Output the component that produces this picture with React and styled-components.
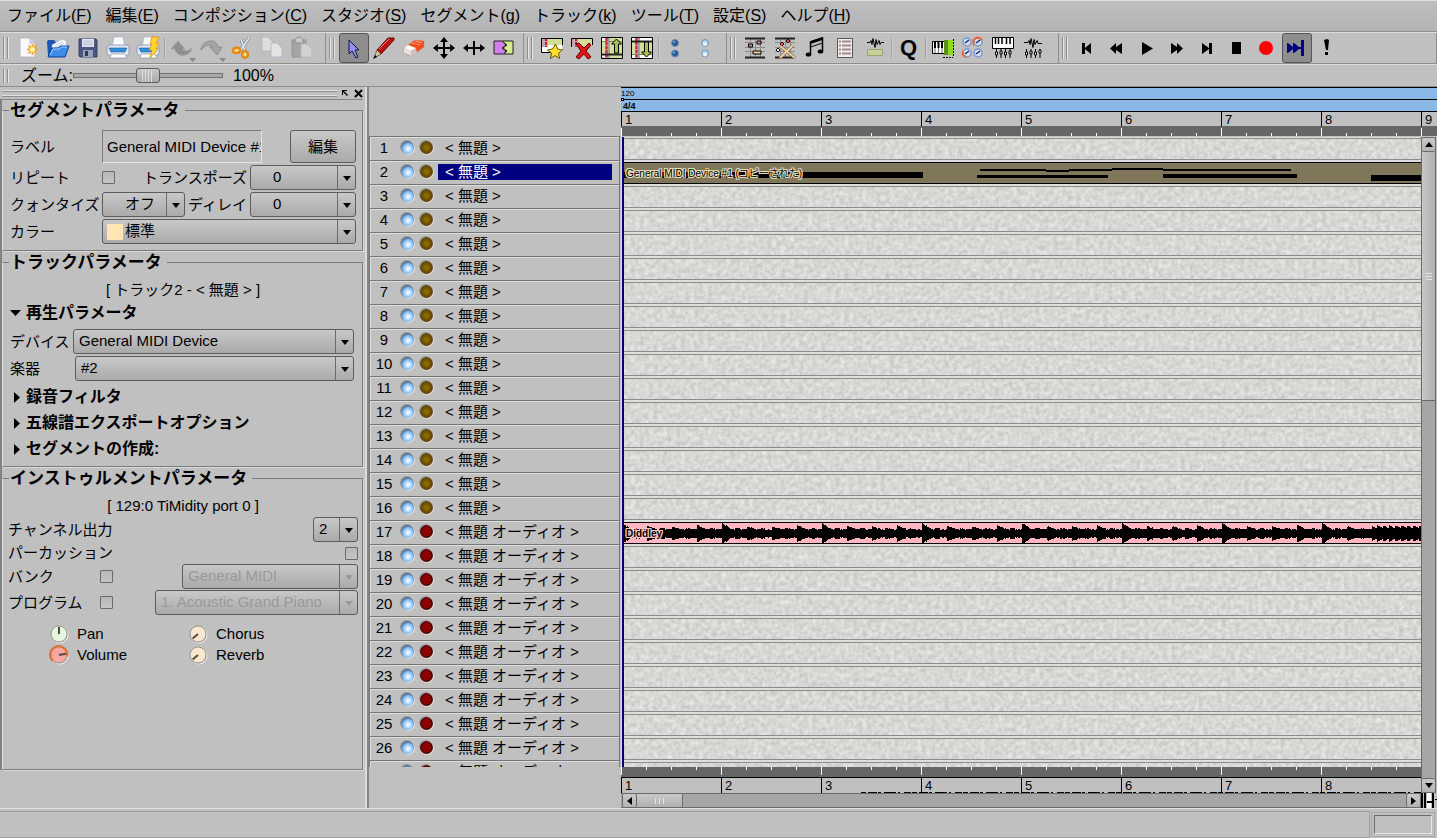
import React, { useState } from 'react';
import styled, { createGlobalStyle } from 'styled-components';

/* ---------- data ---------- */

const menus = [
    ['ファイル', 'F'], ['編集', 'E'], ['コンポジション', 'C'], ['スタジオ', 'S'], ['セグメント', 'g'],
    ['トラック', 'k'], ['ツール', 'T'], ['設定', 'S'], ['ヘルプ', 'H'],
];

const tracks = Array.from({ length: 27 }, (_, i) => ({
    id: i + 1,
    audio: i >= 16,
    name: i >= 16 ? '< 無題 オーディオ >' : '< 無題 >',
}));

const bars = [1, 2, 3, 4, 5, 6, 7, 8, 9];

// x, y, width, height of the notes in the segment preview
const notes = [
    [0, 9, 299, 6], [356, 6, 66, 2], [353, 12, 131, 3], [422, 7, 23, 2], [445, 6, 43, 2],
    [488, 5, 51, 2], [539, 6, 128, 2], [539, 11, 134, 4], [747, 12, 51, 6],
];

// peaks for the audio preview, one for each pixel column
const peaks = Array.from({ length: 798 }, (_, x) => {
    const rand = Math.abs(Math.sin(x * 12.9898) * 43758.5453) % 1;
    const small = Math.abs(Math.sin(x * 4.17) * 917.3) % 1;
    if (x > 747) {
        return Math.round(5 + 3 * (1 - ((x - 747) % 6) / 6) + rand);
    }
    const beat = (x + 2) % 25;
    const loud = [10, 7, 7, 8][Math.floor((x + 2) / 25) % 4];
    const tail = beat < 9 ? (loud - 4) * (1 - beat / 9) : (beat > 12 && beat < 18 ? 1 : 0);
    return Math.round(4 + tail + rand + small / 2);
});

const wavePath = peaks.map((p, x) => `M${x} ${11 - p}h1v${p * 2 - 1}h-1z`).join('');

/* ---------- icons ---------- */

const Page = ({ x, y, w, h, fill }) => (
    <path d={`M${x} ${y}h${w - 5}l5 5v${h - 5}h${-w}z`} fill={fill || '#fbfbff'} stroke="#b6b8c8" />
);

const icons = {
    new: <>
        <Page x={3} y={1} w={15} h={19} />
        <path d="M13 1v5h5" fill="#d6d9e6" stroke="#b6b8c8" />
        <path d="M15.500 7v11M10 12.500h11M11.600 8.600l7.800 7.800M19.400 8.600l-7.800 7.800" stroke="#f0a81e" strokeWidth="2" />
        <circle cx="15.500" cy="12.500" r="2.500" fill="#fff3b0" />
    </>,
    open: <>
        <path d="M0 5l1-2h6l2 2h9v14H1z" fill="#1c56b4" />
        <path d="M5 8l10-6 4 2 1 10-15 2z" fill="#fdfdff" stroke="#9cb4d8" strokeWidth=".6" />
        <path d="M8 9l8-5M8 11l9-5" stroke="#b8cdea" />
        <path d="M1 20L5 11h6l3-2h8l-4 11z" fill="#3f8ceb" stroke="#0d3f98" />
        <path d="M3 18l3-6h6l3-2h5" stroke="#a8d4ff" fill="none" />
    </>,
    save: <>
        <path d="M2 2h17l1 1v17H3l-1-1z" fill="#4b5680" stroke="#39426a" />
        <path d="M5 2h12v8H5z" fill="#e2e6f2" />
        <path d="M6 4h10M6 6h10M6 8h10" stroke="#b7bdd2" />
        <path d="M6 13h10v7H6z" fill="#9aa2c0" />
        <path d="M8 14h3v5H8z" fill="#2f3858" />
    </>,
    print: <>
        <path d="M5 11L7 0h9l2 11z" fill="#fbfcff" stroke="#a8b4cc" strokeWidth=".7" />
        <path d="M0 10l3-2h17l2 2v7l-3 2H3l-3-2z" fill="#e4e8f2" stroke="#8890aa" strokeWidth=".8" />
        <path d="M2 11h18l-2 4H4z" fill="#2f8fd8" stroke="#155a9c" strokeWidth=".6" />
        <path d="M4 17h14l2 4H3z" fill="#fff" stroke="#8890aa" strokeWidth=".7" />
    </>,
    quickPrint: <>
        <path d="M5 11L7 0h9l2 11z" fill="#fbfcff" stroke="#a8b4cc" strokeWidth=".7" />
        <path d="M0 10l3-2h17l2 2v7l-3 2H3l-3-2z" fill="#e4e8f2" stroke="#8890aa" strokeWidth=".8" />
        <path d="M2 11h18l-2 4H4z" fill="#2f8fd8" stroke="#155a9c" strokeWidth=".6" />
        <path d="M4 17h14l2 4H3z" fill="#fff" stroke="#8890aa" strokeWidth=".7" />
        <path d="M15 0h7l-3 6h3l-3 6h2l-8 9 2-8h-3l3-6h-2z" fill="#ffd52e" stroke="#e8901a" strokeWidth=".8" />
    </>,
    undo: <>
        <path d="M7 4L0 12h4c1 5 5 7 10 6 4-1 7-4 7-7-3 3-8 4-10 1h3z" fill="#8e8e8e" stroke="#a2a2a2" />
        <path d="M18 21h7l-3 4z" fill="#8a8a8a" />
    </>,
    redo: <>
        <path d="M0 13C0 8 5 4 10 4c4 0 6 2 7 6h4l-5 8-7-8h3c-2-3-7-3-12 3z" fill="#a6a6a6" stroke="#8b8b8b" />
        <path d="M18 21h7l-3 4z" fill="#8a8a8a" />
    </>,
    cut: <>
        <path d="M18 1L9 14M10 2l4 12" stroke="#7f8898" strokeWidth="3" />
        <path d="M18 1L9 14M10 2l4 12" stroke="#e2e8f4" strokeWidth="1.500" />
        <ellipse cx="5.500" cy="13.500" rx="3.800" ry="2.600" fill="#f8d890" stroke="#e08a10" strokeWidth="2.500" transform="rotate(-10 5 13)" />
        <ellipse cx="14" cy="17.500" rx="3" ry="3.200" fill="#f8d890" stroke="#e08a10" strokeWidth="2.500" />
    </>,
    copy: <>
        <Page x={1} y={0} w={11} h={14} fill="#dedede" />
        <Page x={10} y={6} w={11} h={14} fill="#e4e4e4" />
    </>,
    paste: <>
        <path d="M1 3h14v17H1z" fill="#a4a4a4" stroke="#949494" />
        <path d="M4 4c0-5 8-5 8 0v2H4z" fill="#c8c8c8" stroke="#8e8e8e" />
        <Page x={10} y={7} w={11} h={13} fill="#d2d2d2" />
    </>,
    select: <path d="M6 3v14l3-3 4 7 2-1-3-7h4z" fill="#8f8ff0" stroke="#16163c" />,
    pencil: <>
        <path d="M15 1h6v2L8 17l-4-4z" fill="#c01010" stroke="#5c0808" />
        <path d="M16 2L6 12" stroke="#ff8080" />
        <path d="M4 13l4 4-7 4z" fill="#d8c89a" stroke="#2a1c10" strokeWidth=".6" />
        <path d="M0 22l4-2-2-2z" fill="#000" />
    </>,
    eraser: <>
        <path d="M1 11L12 3l9 1v6L9 19l-8-3z" fill="#f04c1c" stroke="#e08060" strokeWidth=".6" />
        <path d="M1 11l7 3 1 5-8-3z" fill="#e4e4e4" />
        <path d="M1 11l4-3 8 3-5 3z" fill="#fff" />
        <path d="M8 14l5-3 1 5-5 3z" fill="#c8c8c8" />
        <path d="M9 6l8 2M12 4l7 2" stroke="#ffa080" />
    </>,
    move: <path d="M11 0l4 5h-3v5h5V7l5 4-5 4v-3h-5v5h3l-4 5-4-5h3v-5H5v3l-5-4 5-4v3h5V5H7z" fill="#000" />,
    resize: <path d="M0 11l5-4v3h5V4h2v6h5V7l5 4-5 4v-3h-5v6h-2v-6H5v3z" fill="#000" />,
    split: <>
        <path d="M1 4h8l4 4-4 3 4 3-2 3H1z" fill="#d07fe8" stroke="#222" />
        <path d="M9 4h11v13h-9l3-3-4-3 4-3z" fill="#d4ec8c" stroke="#222" />
    </>,
    addTrack: <>
        <path d="M0 1h21v14H0z" fill="#fff" />
        <path d="M0 1h21v7H0z" fill="#d4dc98" />
        <path d="M1 1h6v9H1z" fill="#c8a0b0" />
        <path d="M5 1v9" stroke="#c02040" strokeWidth="2" strokeDasharray="3 1" />
        <path d="M.5 1v14.500H10M.5 1.500h21V8" fill="none" stroke="#000" />
        <path d="M14.500 7l2 5 5 1-4 3 1 5.500-4.500-3-4.500 3 1-5.500-4-3 5-1z" fill="#ffe02a" stroke="#6c5400" />
    </>,
    deleteTrack: <>
        <path d="M0 1h21v8H0z" fill="#d4dc98" />
        <path d="M1 1h6v8H1z" fill="#c8a0b0" />
        <path d="M5 1v9" stroke="#c02040" strokeWidth="2" strokeDasharray="3 1" />
        <path d="M.5 10V1.500h21V8" fill="none" stroke="#000" />
        <path d="M5 7l3-1 5 5 5-5 2 2-5 6 5 6-3 2-4-5-5 5-3-2 5-6z" fill="#e01818" stroke="#600" />
    </>,
    trackUp: <>
        <path d="M.5 .5h21v21H.5z" fill="#d4e09a" stroke="#000" />
        <path d="M1 3h3M1 18h3" stroke="#fff" strokeWidth="4" />
        <path d="M4 1h5v20H4z" fill="#b09aac" />
        <path d="M5.500 1v20" stroke="#d02040" strokeWidth="2" strokeDasharray="3 1" />
        <path d="M1 4.500h20" stroke="#7c8468" />
        <path d="M1 17.500h20" stroke="#222" strokeWidth="2" />
        <path d="M15.500 2l5 5h-3v9h-4V7h-3z" fill="#a8c058" stroke="#000" />
    </>,
    trackDown: <>
        <path d="M.5 .5h21v21H.5z" fill="#fff" stroke="#000" />
        <path d="M1 4h20v14H1z" fill="#d4e09a" />
        <path d="M4 1h5v20H4z" fill="#b09aac" />
        <path d="M5.500 1v20" stroke="#d02040" strokeWidth="2" strokeDasharray="3 1" />
        <path d="M1 4.500h20" stroke="#222" strokeWidth="2" />
        <path d="M1 17.500h20" stroke="#7c8468" />
        <path d="M15.500 20l5-5h-3V5h-4v10h-3z" fill="#a8c058" stroke="#000" />
    </>,
    muteAll: <>
        <circle cx="10" cy="6" r="3.500" fill="#2c5a90" stroke="#6d8db2" />
        <circle cx="10" cy="16.500" r="3.500" fill="#2c5a90" stroke="#6d8db2" />
        <circle cx="9" cy="5" r="1" fill="#8fb4dc" /><circle cx="9" cy="15.500" r="1" fill="#8fb4dc" />
    </>,
    unmuteAll: <>
        <circle cx="10" cy="6" r="3.500" fill="#a8d0f8" stroke="#7694b8" />
        <circle cx="10" cy="16.500" r="3.500" fill="#a8d0f8" stroke="#7694b8" />
        <circle cx="10" cy="7" r="2" fill="#e8f6ff" /><circle cx="10" cy="17.500" r="2" fill="#e8f6ff" />
    </>,
    matrix: <>
        <path d="M1 5.500h20M1 10.500h20M1 14.500h20M6.500 1v20M11.500 1v20M16.500 1v20" stroke="#8c8c8c" />
        <path d="M1 1.500h20M1 20.500h20" stroke="#222" strokeWidth="2" />
        <path d="M4.500 7h4v3h-4zM13 4h4v3h-4z" fill="#d09090" stroke="#000" />
        <path d="M9 14h8v3H9z" fill="#f0d090" stroke="#000" />
    </>,
    percussion: <>
        <path d="M1 5.500h20M1 10.500h20M1 14.500h20M6.500 1v20M11.500 1v20M16.500 1v20" stroke="#8c8c8c" />
        <path d="M1 1.500h20M1 20.500h20" stroke="#222" strokeWidth="2" />
        <path d="M8 5l2 2-2 2-2-2zM14 2l2 2-2 2-2-2z" fill="#d06060" stroke="#400" />
        <path d="M4 11l2 2-2 2-2-2z" fill="#fff" stroke="#000" />
        <path d="M6 9l15 12M19 8L6 21" stroke="#75583c" strokeWidth="3" />
        <path d="M6 9l15 12M19 8L6 21" stroke="#ecd0a8" strokeWidth="2" />
    </>,
    notation: <>
        <path d="M6.500 17V5l12-4v13" fill="none" stroke="#000" strokeWidth="1.500" />
        <path d="M6.500 4l12-4v3l-12 4z" fill="#000" />
        <path d="M6.500 10l12-4" stroke="#000" />
        <ellipse cx="4.500" cy="17.500" rx="2.800" ry="2" fill="#000" />
        <ellipse cx="16.500" cy="14.500" rx="2.800" ry="2" fill="#000" />
    </>,
    eventList: <>
        <path d="M3.500 1.500h15v19h-15z" fill="#f4eeee" stroke="#555" />
        <path d="M5 4.500h2M5 8.500h2M5 12.500h2M5 16.500h2M8 4.500h9M8 8.500h9M8 12.500h9M8 16.500h9" stroke="#a08c8c" strokeWidth="2" />
    </>,
    audioEdit: <>
        <path d="M3 5.500h3l1-2 1 4 1-6 2 9 1-8 1 5 2-4 1 4 1-2h3" fill="none" stroke="#000" />
        <path d="M3.500 12.500h15v6h-15z" fill="#c8d098" stroke="#9aa46c" />
    </>,
    quantize: <text x="2" y="18" fontFamily="Liberation Sans" fontWeight="bold" fontSize="22" fill="#000">Q</text>,
    banks: <>
        <path d="M.5 4.500h13v12H.5z" fill="#fff" stroke="#000" />
        <path d="M3 4v7M6.500 4v7M10 4v7" stroke="#000" strokeWidth="2" />
        <path d="M3 11v5M6.500 11v5M10 11v5" stroke="#666" />
        <path d="M12 3h9v15h-9z" fill="#8cdc1c" />
        <path d="M12 3h4v15h-4z" fill="#5c8c20" />
        <path d="M21.500 2v17M11 20.500h10" stroke="#000" strokeDasharray="2 1" />
    </>,
    controllers: <>
        {[[5, 5], [16, 5], [5, 16], [16, 16]].map(([x, y]) => (
            <g key={`${x}-${y}`}>
                <circle cx={x} cy={y} r="4" fill="#cfe0fa" stroke="#7d97cc" strokeWidth="1.500" />
                <path d={`M${x + 2} ${y - 2}l-4 3`} stroke="#222a50" strokeWidth="1.500" />
            </g>
        ))}
        <path d="M12 8c-3-6 4-10 8-5M1 14c-1 3 0 5 3 6" fill="none" stroke="#e8683a" strokeWidth="2" />
    </>,
    keys: <>
        <path d="M.5 .5h21v11H.5z" fill="#fff" stroke="#000" />
        <path d="M3.500 1v6M6.500 1v6M10 1v6M14.500 1v6M18 1v6" stroke="#000" strokeWidth="1.500" />
        <path d="M4.500 12v9M9 12v9M13.500 12v9M18 12v9" stroke="#000" />
        <path d="M3.500 15h2v3h-2zM8 14h2v3H8zM12.500 15h2v3h-2zM17 14h2v3h-2z" fill="#fff" stroke="#000" />
    </>,
    mixer: <>
        <path d="M2 5.500h4l1-2 1 4 1-6 2 9 1-8 1 5 2-4 1 3h4" fill="none" stroke="#000" />
        <path d="M4.500 12v9M9 12v9M13.500 12v9M18 12v9" stroke="#000" />
        <path d="M3.500 15h2v3h-2zM8 14h2v3H8zM12.500 15h2v3h-2zM17 13h2v3h-2z" fill="#fff" stroke="#000" />
    </>,
    toStart: <path d="M6 6h3v5l6-5v11l-6-5v5H6z" fill="#000" />,
    rewind: <path d="M4 11.500L10 6v4l6-4v11l-6-4v4z" fill="#000" />,
    play: <path d="M6 5l11 6.500L6 18z" fill="#000" />,
    forward: <path d="M17 11.500L11 6v4L5 6v11l6-4v4z" fill="#000" />,
    toEnd: <path d="M16 6h-3v5L6 6v11l7-5v5h3z" fill="#000" />,
    stop: <path d="M6 5h9v12H6z" fill="#000" />,
    record: <circle cx="10" cy="11" r="7" fill="#f00" />,
    follow: <path d="M1 6h1l5 4V6h1l5 4h2V3h3v16h-3v-7h-2l-5 4H7v-4l-5 4H1z" fill="#000080" />,
    panic: <path d="M8 3l3-1 2 1-1 10h-2zM9 15h3v3H9z" fill="#000" />,
};

const toolGroups = [
    { end: 8, items: ['new', 'open', 'save', 'print', 'quickPrint', '|', 'undo', 'redo', 'cut', 'copy', 'paste'] },
    { end: 4, items: ['select', 'pencil', 'eraser', 'move', 'resize', 'split'] },
    { end: 5, items: ['addTrack', 'deleteTrack', 'trackUp', 'trackDown', '|', 'muteAll', 'unmuteAll'] },
    { end: 10, items: ['matrix', 'percussion', 'notation', 'eventList', 'audioEdit', '|', 'quantize', '|', 'banks', 'controllers', 'keys', 'mixer'] },
    { end: 0, items: ['toStart', 'rewind', 'play', 'forward', 'toEnd', 'stop', 'record', 'follow', 'panic'] },
];

/* ---------- parts ---------- */

function Combo({ label, value, width, disabled, swatch }) {
    return (
        <ComboBox $width={width} $disabled={disabled}>
            <select aria-label={label} disabled={disabled} defaultValue={value}>
                <option>{value}</option>
            </select>
            {swatch && <Swatch />}
            <svg width="8" height="5" viewBox="0 0 8 5"><path d="M0 0h8L4 5z" fill={disabled ? '#999' : '#000'} /></svg>
        </ComboBox>
    );
}

function Knob({ name, face, ring, angle }) {
    return (
        <KnobLabel>
            <KnobButton aria-label={name}>
                <svg width="20" height="20" viewBox="0 0 20 20">
                    <circle cx="11" cy="11" r="8" fill="none" stroke="#ececec" />
                    <circle cx="10" cy="10" r="8" fill={face} stroke="#9a9488" />
                    {ring && <path d="M4 16a8.500 8.500 0 1 1 14-5" fill="none" stroke="#e07030" strokeWidth="2" />}
                    <path d="M10 10V3" stroke="#554a40" strokeWidth="2" transform={`rotate(${angle} 10 10)`} />
                </svg>
            </KnobButton>
            {name}
        </KnobLabel>
    );
}

function Ruler({ bottom }) {
    const strip = (
        <TickStrip>
            {bars.map(bar => (
                <BarTicks key={bar} $bottom={bottom}>
                    <Tick $big /><Tick /><Tick /><Tick />
                </BarTicks>
            ))}
        </TickStrip>
    );
    return (
        <>
            {bottom && strip}
            <BarStrip $bottom={bottom}>
                {bars.slice(0, bottom ? 8 : 9).map(bar => <Bar key={bar}>{bar}</Bar>)}
                {bottom && (
                    <Dashes width="560" height="1">
                        <path d="M0 .5h560" stroke="#000" strokeDasharray="5 2 9 1 3 3 12 2 2 4 7 1" />
                    </Dashes>
                )}
            </BarStrip>
            {!bottom && strip}
        </>
    );
}

function App() {
    const [selected, setSelected] = useState(2);
    const [zoom, setZoom] = useState(50);

    return (
        <Window>
            <GlobalStyle />
            <MenuBar>
                {menus.map(([name, key]) => (
                    <MenuItem key={name}>{name}(<u>{key}</u>)</MenuItem>
                ))}
            </MenuBar>

            <ToolBar>
                {toolGroups.map((group, g) => (
                    <ToolGroup key={g} $end={group.end}>
                        <Handle />
                        {group.items.map((item, i) => item === '|' ? <Divider key={i} /> : (
                            <ToolButton key={item} aria-label={item} $on={item === 'select' || item === 'follow'}>
                                <svg width="22" height="22" viewBox="0 0 22 22" fill="none">{icons[item]}</svg>
                            </ToolButton>
                        ))}
                    </ToolGroup>
                ))}
            </ToolBar>

            <ZoomBar>
                <Handle />
                <label htmlFor="zoom">ズーム:</label>
                <Slider id="zoom" type="range" value={zoom} onChange={e => setZoom(e.target.value)} />
                <span>100%</span>
            </ZoomBar>

            <Main>
                {/* parameter dock */}
                <Dock>
                    <DockTitle>
                        <Rails />
                        <DockButton aria-label="float">
                            <svg width="7" height="7"><path d="M0 0h5v1H2l4 4-1 1-4-4v3H0z" /></svg>
                        </DockButton>
                        <DockButton aria-label="close">
                            <svg width="9" height="9"><path d="M1 1l7 7M8 1L1 8" stroke="#000" strokeWidth="2" /></svg>
                        </DockButton>
                    </DockTitle>
                    <DockBody>
                        <Group>
                            <legend>セグメントパラメータ</legend>
                            <Fields $top={9} $bottom={6}>
                                <Field $height={33}>
                                    <Caption $width={92} htmlFor="segment-label">ラベル</Caption>
                                    <TextBox id="segment-label" readOnly value="General MIDI Device #1 (コピーされた)" />
                                    <EditButton>編集</EditButton>
                                </Field>
                                <Field>
                                    <Caption $width={92} htmlFor="repeat">リピート</Caption>
                                    <CheckBox id="repeat" />
                                    <Caption $right>トランスポーズ</Caption>
                                    <InsetCombo><Combo label="トランスポーズ" value="0" width={106} /></InsetCombo>
                                </Field>
                                <Field>
                                    <Caption $width={92}>クォンタイズ</Caption>
                                    <InsetCombo><Combo label="クォンタイズ" value="オフ" width={83} /></InsetCombo>
                                    <Caption $right>ディレイ</Caption>
                                    <InsetCombo><Combo label="ディレイ" value="0" width={106} /></InsetCombo>
                                </Field>
                                <Field>
                                    <Caption $width={92}>カラー</Caption>
                                    <InsetCombo $grow><Combo label="カラー" value="標準" swatch /></InsetCombo>
                                </Field>
                            </Fields>
                        </Group>

                        <Group>
                            <legend>トラックパラメータ</legend>
                            <Fields $top={7} $bottom={4} $flush>
                                <Center>[ トラック2 - &lt; 無題 &gt; ]</Center>
                                <Fold $open><svg width="11" height="6"><path d="M0 0h11L5.500 6z" /></svg>再生パラメータ</Fold>
                                <Pickers>
                                    <Field>
                                        <Caption $width={63}>デバイス</Caption>
                                        <Combo label="デバイス" value="General MIDI Device" />
                                    </Field>
                                    <Field>
                                        <Caption $width={65}>楽器</Caption>
                                        <Combo label="楽器" value="#2" />
                                    </Field>
                                </Pickers>
                                {['録音フィルタ', '五線譜エクスポートオプション', 'セグメントの作成:'].map(name => (
                                    <Fold key={name}><svg width="11" height="11"><path d="M4 0l6 5.500L4 11z" /></svg>{name}</Fold>
                                ))}
                            </Fields>
                        </Group>

                        <Group $grow>
                            <legend>インストゥルメントパラメータ</legend>
                            <Fields $top={7} $bottom={4} $wide $flush>
                                <Center>[ 129:0 TiMidity port 0 ]</Center>
                                <Field $apart>
                                    <Caption>チャンネル出力</Caption>
                                    <Combo label="チャンネル出力" value="2" width={45} />
                                </Field>
                                <Field $apart $height={22}>
                                    <Caption htmlFor="percussion">パーカッション</Caption>
                                    <CheckBox id="percussion" />
                                </Field>
                                <Field $apart>
                                    <Caption $width={92} htmlFor="bank">バンク</Caption>
                                    <CheckBox id="bank" />
                                    <Push><Combo label="バンク" value="General MIDI" width={176} disabled /></Push>
                                </Field>
                                <Field $apart $height={27}>
                                    <Caption $width={92} htmlFor="program">プログラム</Caption>
                                    <CheckBox id="program" />
                                    <Push><Combo label="プログラム" value="1. Acoustic Grand Piano" width={203} disabled /></Push>
                                </Field>
                                <Knobs>
                                    <Knob name="Pan" face="#e2f6e0" angle={0} />
                                    <Knob name="Chorus" face="#f8e8d0" angle={-130} />
                                    <Knob name="Volume" face="#f8a8a0" ring angle={80} />
                                    <Knob name="Reverb" face="#f8e8d0" angle={-130} />
                                </Knobs>
                            </Fields>
                        </Group>
                    </DockBody>
                </Dock>

                {/* track buttons */}
                <TrackPane>
                    <TrackList>
                        {tracks.map(track => (
                            <TrackRow key={track.id} onClick={() => setSelected(track.id)}>
                                <TrackNumber>{track.id < 27 && track.id}</TrackNumber>
                                <Led $mute aria-label="mute" />
                                <Led $audio={track.audio} aria-label="record" />
                                <TrackName $selected={selected === track.id}>{track.name}</TrackName>
                            </TrackRow>
                        ))}
                    </TrackList>
                </TrackPane>

                {/* composition */}
                <Timeline>
                    <TempoRuler>120<TempoPoint /></TempoRuler>
                    <SignatureRuler>4/4</SignatureRuler>
                    <Ruler />
                    <Scroller>
                        <CanvasColumn>
                            <Canvas>
                                <Paper>
                                    <filter id="grain" x="0" y="0" width="100%" height="100%" colorInterpolationFilters="sRGB">
                                        <feTurbulence type="fractalNoise" baseFrequency="0.22" numOctaves="3" seed="4" />
                                        <feColorMatrix values="0.2 0 0 0 0.75  0.2 0 0 0 0.745  0.2 0 0 0 0.73  0 0 0 0 1" />
                                    </filter>
                                    <rect width="100%" height="100%" filter="url(#grain)" />
                                </Paper>
                                {tracks.map(track => (
                                    <Lane key={track.id}>
                                        {track.id === 2 && (
                                            <Segment $color="#80765a">
                                                <svg width="798" height="20">
                                                    {notes.map(([x, y, w, h], i) => <rect key={i} x={x} y={y} width={w} height={h} />)}
                                                </svg>
                                                <SegmentName $halo="#e8dfb8">General MIDI Device #1 (コピーされた)</SegmentName>
                                            </Segment>
                                        )}
                                        {track.id === 17 && (
                                            <Segment $color="#ffb6c1">
                                                <svg width="798" height="20"><path d={wavePath} /></svg>
                                                <SegmentName $halo="#ffc8d0" $bold>Diddley</SegmentName>
                                            </Segment>
                                        )}
                                    </Lane>
                                ))}
                                <Pointer />
                            </Canvas>
                            <Ruler bottom />
                            <HScroll>
                                <ScrollButton aria-label="left"><svg width="5" height="8"><path d="M5 0v8L0 4z" /></svg></ScrollButton>
                                <HThumb><i /><i /><i /></HThumb>
                                <ScrollButton aria-label="right"><svg width="5" height="8"><path d="M0 0v8l5-4z" /></svg></ScrollButton>
                            </HScroll>
                        </CanvasColumn>
                        <SideColumn>
                            <VScroll>
                                <ScrollButton aria-label="up"><svg width="8" height="5"><path d="M0 5h8L4 0z" /></svg></ScrollButton>
                                <VThumb><i /><i /><i /></VThumb>
                                <ScrollButton aria-label="down"><svg width="8" height="5"><path d="M0 0h8L4 5z" /></svg></ScrollButton>
                            </VScroll>
                            <svg width="16" height="15">
                                <path d="M0 0h2v15H0zM3 0h2v15H3z" />
                                <path d="M6 0h4v15H6z" fill="#fff" />
                                <path d="M6 8h5V0h2v15h-2v-5H6zM14 6h2v1h-2z" />
                            </svg>
                        </SideColumn>
                    </Scroller>
                </Timeline>
            </Main>

            <StatusBar>
                <StatusText />
                <StatusBox><div /></StatusBox>
            </StatusBar>
        </Window>
    );
}

export default App;

/* ---------- styles ---------- */

const GlobalStyle = createGlobalStyle`
   * {
       box-sizing: border-box;
   }

   body {
       margin: 0;
       background: #c0c0c0;
       color: #000;
       font: 15px/20px "Liberation Sans", "Noto Sans CJK JP", sans-serif;
       overflow: hidden;
   }

   button, input, select {
       font: inherit;
       color: inherit;
       margin: 0;
       padding: 0;
   }
`

const Window = styled.div`
   display: flex;
   flex-direction: column;
   height: 100vh;
`

const MenuBar = styled.nav`
   display: flex;
   flex: none;
   gap: 14px;
   height: 32px;
   padding-left: 7px;
   border-top: 1px solid #e0e0e0;
   border-bottom: 1px solid #8e8e8e;
   background: linear-gradient(#bebebe, #b3b3b3);
`

const MenuItem = styled.button`
   border: 0;
   background: none;
   font-size: 16px;
   line-height: 30px;
   white-space: nowrap;

   u {
       text-underline-offset: 2px;
   }
`

const ToolBar = styled.div`
   display: flex;
   flex: none;
   height: 32px;
   border-top: 1px solid #dedede;
   border-bottom: 1px solid #8e8e8e;
`

const ToolGroup = styled.div`
   display: flex;
   align-items: center;
   padding-right: ${props => props.$end}px;
   border-right: 1px solid #8e8e8e;

   &:last-child {
       flex: 1;
   }
`

const Handle = styled.div`
   width: 5px;
   height: 22px;
   margin: 0 5px 0 3px;
   border: solid #8e8e8e;
   border-width: 0 1px;
   box-shadow: inset 1px 0 #e6e6e6, 1px 0 #e6e6e6;
`

const Divider = styled.div`
   width: 2px;
   height: 20px;
   margin: 0 1px;
   border-left: 1px solid #a2a2a2;
   background: #cecece;
`

const ToolButton = styled.button`
   display: flex;
   align-items: center;
   justify-content: center;
   width: 30px;
   height: 30px;
   border: 1px solid ${props => props.$on ? '#555' : 'transparent'};
   border-radius: 3px;
   background: ${props => props.$on ? '#8e8e8e' : 'none'};

   svg {
       flex: none;
       overflow: visible;
   }
`

const ZoomBar = styled.div`
   display: flex;
   flex: none;
   align-items: center;
   height: 23px;
   border-top: 1px solid #dedede;
   border-bottom: 1px solid #8e8e8e;
   font-size: 16px;

   label {
       width: 60px;
       text-align: right;
       white-space: nowrap;
   }

   ${Handle} {
       height: 14px;
   }

   span {
       margin-left: 10px;
   }
`

const Slider = styled.input`
   appearance: none;
   width: 150px;
   height: 16px;
   background: none;

   &::-webkit-slider-runnable-track {
       height: 5px;
       border: 1px solid #727272;
       background: #a8a8a8;
   }

   &::-webkit-slider-thumb {
       appearance: none;
       width: 24px;
       height: 15px;
       margin-top: -6px;
       border: 1px solid #5c5c5c;
       border-radius: 3px;
       background: linear-gradient(90deg, transparent 5px, #ddd 5px 6px, transparent 6px 8px, #ddd 8px 9px, transparent 9px 11px, #ddd 11px 12px, transparent 12px 14px, #ddd 14px 15px, transparent 15px), linear-gradient(#c8c8c8, #aaa);
   }
`

const Main = styled.main`
   display: grid;
   grid-template-columns: 369px 252px minmax(0, 1fr);
   flex: 1;
   min-height: 0;
`

const Dock = styled.aside`
   display: flex;
   flex-direction: column;
   min-height: 0;
   padding-right: 4px;
   border-right: 2px solid #858585;
   box-shadow: inset -2px 0 #dcdcdc;
`

const DockTitle = styled.div`
   display: flex;
   align-items: center;
   flex: none;
   height: 12px;
   padding-left: 2px;
`

const Rails = styled.div`
   flex: 1;
   height: 6px;
   border: solid #e2e2e2;
   border-width: 1px 0;
   box-shadow: inset 0 1px #8e8e8e, 0 1px #8e8e8e;
   margin-right: 4px;
`

const DockButton = styled.button`
   display: flex;
   align-items: center;
   justify-content: center;
   width: 9px;
   height: 9px;
   border: 0;
   background: none;

   & + & {
       margin-left: 4px;
   }
`

const DockBody = styled.div`
   display: flex;
   flex: 1;
   flex-direction: column;
   min-height: 0;
   margin-bottom: 38px;
   border-left: 2px solid #828282;
   box-shadow: inset 0 1px #858585;
`

const Group = styled.fieldset`
   flex: ${props => props.$grow ? 1 : 'none'};
   min-width: 0;
   margin: 0;
   padding: 0;
   border: 1px solid #7c7c7c;
   border-left-color: #e2e2e2;
   box-shadow: 1px 1px #dadada;

   legend {
       height: 22px;
       margin-left: 6px;
       padding: 0 5px 0 1px;
       font-size: 17px;
       font-weight: bold;
       line-height: 24px;
   }
`

const Fields = styled.div`
   display: flex;
   flex-direction: column;
   gap: ${props => props.$flush ? 0 : 2}px;
   padding: ${props => `${props.$top}px ${props.$wide ? 4 : 6}px ${props.$bottom}px ${props.$wide ? 5 : 7}px`};
`

const Field = styled.div`
   display: flex;
   align-items: center;
   justify-content: ${props => props.$apart ? 'space-between' : 'flex-start'};
   height: ${props => props.$height || 25}px;
`

const Caption = styled.label`
   flex: none;
   width: ${props => props.$width ? `${props.$width}px` : 'auto'};
   margin-left: ${props => props.$right ? 'auto' : 0};
   margin-right: ${props => props.$right ? 3 : 0}px;
   white-space: nowrap;
`

const Pickers = styled.div`
   display: flex;
   flex-direction: column;
   gap: 2px;
   margin: 4px 2px 3px 0;
`

const TextBox = styled.input`
   width: 160px;
   height: 33px;
   padding: 0 0 2px 4px;
   border: 1px solid;
   border-color: #7c7c7c #e4e4e4 #e4e4e4 #7c7c7c;
   background: #c0c0c0;
`

const EditButton = styled.button`
   width: 66px;
   height: 33px;
   margin-left: auto;
   border: 1px solid #5c5c5c;
   border-radius: 3px;
   background: linear-gradient(#c8c8c8, #aaa);
`

const CheckBox = styled.input.attrs({ type: 'checkbox' })`
   appearance: none;
   width: 13px;
   height: 13px;
   border: 1px solid #6a6a6a;
   border-radius: 1px;
   background: linear-gradient(#b8b8b8, #c4c4c4);
`

const ComboBox = styled.div`
   position: relative;
   flex: ${props => props.$width ? 'none' : 1};
   width: ${props => props.$width ? `${props.$width}px` : 'auto'};
   height: 25px;

   select {
       appearance: none;
       width: 100%;
       height: 25px;
       padding: 0 20px 1px 5px;
       border: 1px solid #5c5c5c;
       border-radius: 3px;
       background: linear-gradient(90deg, #6a6a6a 1px, transparent 1px) right / 18px 100% no-repeat, linear-gradient(#c8c8c8, #aaa);
       color: ${props => props.$disabled ? '#999' : '#000'};
       opacity: 1;
   }

   svg {
       position: absolute;
       right: 5px;
       top: 11px;
       pointer-events: none;
   }
`

const InsetCombo = styled.div`
   flex: ${props => props.$grow ? 1 : 'none'};

   select {
       padding-left: 22px;
       padding-right: 0;
   }
`

const Push = styled.div`
   margin-left: auto;
`

const Swatch = styled.span`
   position: absolute;
   left: 5px;
   top: 5px;
   width: 16px;
   height: 16px;
   background: #ffe6b0;
   pointer-events: none;
`

const Center = styled.div`
   height: 21px;
   text-align: center;
`

const Fold = styled.button`
   display: flex;
   align-items: center;
   gap: 5px;
   height: ${props => props.$open ? 24 : 26}px;
   border: 0;
   background: none;
   font-size: 16px;
   font-weight: bold;
`

const Knobs = styled.div`
   display: grid;
   grid-template-columns: 139px 139px;
   margin: 7px 0 0 41px;
`

const KnobLabel = styled.div`
   display: flex;
   align-items: center;
   gap: 8px;
   height: 21px;
`

const KnobButton = styled.button`
   display: flex;
   width: 20px;
   height: 20px;
   border: 0;
   background: none;
`

const TrackPane = styled.section`
   min-height: 0;
   display: flex;
   padding: 49px 1px 41px 0;
`

const TrackList = styled.div`
   flex: 1;
   overflow: hidden;
`

const TrackRow = styled.div`
   display: flex;
   align-items: center;
   height: 24px;
   padding: 0 7px 2px 0;
   border: 1px solid #777;
   border-bottom: 0;
   box-shadow: inset 1px 1px #dedede;
`

const TrackNumber = styled.span`
   width: 28px;
   margin-right: 3px;
   text-align: center;
`

const Led = styled.button`
   flex: none;
   width: 13px;
   height: 13px;
   margin-right: ${props => props.$mute ? 6 : 5}px;
   border: 0;
   border-radius: 50%;
   background: ${props => props.$mute
        ? 'radial-gradient(circle at 55% 60%, #e8f8ff 10%, #88c0f8 45%, #3c5878 75%)'
        : props.$audio
            ? 'radial-gradient(circle, #8c0000 45%, #500000 60%, #6c4848)'
            : 'radial-gradient(circle, #8a6600 20%, #644a00 55%, #5c5448)'};
   box-shadow: 1px 1px #dedede, -1px -1px #989898;
`

const TrackName = styled.span`
   flex: 1;
   height: 16px;
   padding-left: 7px;
   line-height: 16px;
   white-space: nowrap;
   background: ${props => props.$selected ? '#000080' : 'none'};
   color: ${props => props.$selected ? '#fff' : '#000'};
`

const Timeline = styled.section`
   display: flex;
   flex-direction: column;
   min-width: 0;
   min-height: 0;
`

const TempoRuler = styled.div`
   position: relative;
   flex: none;
   height: 12px;
   border-top: 1px solid #000;
   background: #8ab8e6;
   font-size: 8px;
   line-height: 12px;
`

const TempoPoint = styled.i`
   position: absolute;
   left: 0;
   bottom: -2px;
   width: 3px;
   height: 3px;
   border: 1px solid #000;
   background: #fff;
`

const SignatureRuler = styled.div`
   flex: none;
   height: 12px;
   padding-left: 2px;
   border-top: 1px solid #000;
   background: #8ab8e6;
   font-size: 9px;
   font-weight: bold;
   line-height: 12px;
`

const BarStrip = styled.div`
   position: relative;
   display: flex;
   flex: none;
   height: ${props => props.$bottom ? 16 : 15}px;
   overflow: hidden;
   border-top: 1px solid #000;
`

const Bar = styled.div`
   flex: none;
   width: 100px;
   padding-left: 3px;
   border-left: 1px solid #000;
   font-size: 13px;
   line-height: 15px;
`

const Dashes = styled.svg`
   position: absolute;
   right: 0;
   bottom: 0;
`

const TickStrip = styled.div`
   display: flex;
   flex: none;
   height: 10px;
   overflow: hidden;
   background: #666;
`

const BarTicks = styled.div`
   display: flex;
   flex: none;
   align-items: ${props => props.$bottom ? 'flex-start' : 'flex-end'};
   width: 100px;
`

const Tick = styled.i`
   width: 25px;
   height: ${props => props.$big ? 8 : 3}px;
   border-left: 1px solid #fff;
`

const Scroller = styled.div`
   display: flex;
   flex: 1;
   min-height: 0;
   margin-top: 1px;
`

const CanvasColumn = styled.div`
   display: flex;
   flex: 1;
   flex-direction: column;
   min-width: 0;
`

const Canvas = styled.div`
   position: relative;
   flex: 1;
   min-height: 0;
   overflow: hidden;
   border-left: 1px solid #dcdcdc;
`

const Paper = styled.svg`
   position: absolute;
   inset: 0;
   width: 100%;
   height: 100%;
`

const Lane = styled.div`
   position: relative;
   height: 22px;
   margin: 1px 0 2px;
   border: solid #8c8c8c;
   border-width: 1px 0;
   box-shadow: 0 1px #dedede, 0 -1px #dedede;
`

const Segment = styled.div`
   position: relative;
   height: 22px;
   margin: -1px 0 0 2px;
   overflow: hidden;
   border: solid #000;
   border-width: 1px 0;
   background: ${props => props.$color};

   svg {
       display: block;
   }
`

const SegmentName = styled.span`
   position: absolute;
   left: 2px;
   top: 5px;
   font-size: 10px;
   font-weight: ${props => props.$bold ? 'bold' : 'normal'};
   line-height: 12px;
   white-space: nowrap;
   text-shadow: ${props => ['1px 0', '-1px 0', '0 1px', '0 -1px', '1px 1px', '-1px -1px', '1px -1px', '-1px 1px'].map(o => `${o} ${props.$halo}`).join(', ')};
`

const Pointer = styled.div`
   position: absolute;
   left: 0;
   top: 0;
   bottom: 0;
   width: 2px;
   background: #000080;
`

const ScrollButton = styled.button`
   display: flex;
   flex: none;
   align-items: center;
   justify-content: center;
   width: 15px;
   height: 15px;
   border: 1px solid #6a6a6a;
   border-radius: 2px;
   background: linear-gradient(#c8c8c8, #b4b4b4);
`

const HScroll = styled.div`
   display: flex;
   flex: none;
   height: 15px;
   padding-left: 1px;
   border: solid #6a6a6a;
   border-width: 1px 0;
   background: #a6a6a6;

   ${ScrollButton} {
       height: 13px;
       border-width: 0 1px;
   }

   ${ScrollButton}:last-child {
       margin-left: auto;
   }
`

const HThumb = styled.div`
   display: flex;
   align-items: center;
   justify-content: center;
   gap: 3px;
   width: 46px;
   border-right: 1px solid #6a6a6a;
   background: linear-gradient(#c8c8c8, #b0b0b0);

   i {
       width: 1px;
       height: 6px;
       background: #e6e6e6;
   }
`

const SideColumn = styled.div`
   display: flex;
   flex: none;
   flex-direction: column;
   width: 16px;

   > svg {
       flex: none;
   }
`

const VScroll = styled.div`
   display: flex;
   flex: 1;
   flex-direction: column;
   width: 15px;
   min-height: 0;
   border: solid #6a6a6a;
   border-width: 0 1px;
   background: #a6a6a6;

   ${ScrollButton} {
       width: 13px;
       border-width: 1px 0;
   }

   ${ScrollButton}:last-child {
       margin-top: auto;
   }
`

const VThumb = styled.div`
   display: flex;
   flex: 0 1 249px;
   flex-direction: column;
   align-items: center;
   justify-content: center;
   gap: 2px;
   border-bottom: 1px solid #6a6a6a;
   background: linear-gradient(90deg, #c8c8c8, #b0b0b0);

   i {
       width: 6px;
       height: 1px;
       background: #e6e6e6;
   }
`

const StatusBar = styled.footer`
   display: flex;
   flex: none;
   height: 30px;
   padding-top: 2px;
   border-top: 1px solid #e0e0e0;
`

const StatusText = styled.div`
   flex: 1;
   border: 1px solid #a0a0a0;
   border-left: 0;
`

const StatusBox = styled.div`
   width: 64px;
   height: 25px;
   margin: 1px 2px 0 1px;
   padding: 2px;
   border: 1px solid #a8a8a8;

   div {
       height: 19px;
       border: 1px solid;
       border-color: #6a6a6a #e4e4e4 #e4e4e4 #6a6a6a;
   }
`
